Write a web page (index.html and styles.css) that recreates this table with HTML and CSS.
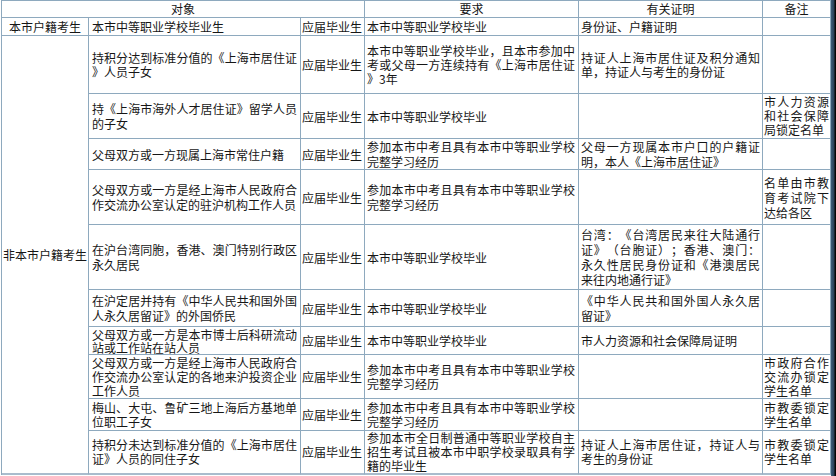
FILE: index.html
```html
<!DOCTYPE html>
<html lang="zh-CN">
<head>
<meta charset="utf-8">
<title>招生对象</title>
<link rel="stylesheet" href="styles.css">
</head>
<body>
<div class="page">
  <div class="sheet">
    <table class="grid">
      <colgroup>
        <col class="c1"><col class="c2"><col class="c3"><col class="c4"><col class="c5"><col class="c6">
      </colgroup>
      <tr class="r0">
        <td colspan="3" class="head">对象</td>
        <td class="head">要求</td>
        <td class="head">有关证明</td>
        <td class="head">备注</td>
      </tr>
      <tr class="r1">
        <td class="cat">本市户籍考生</td>
        <td class="who">本市中等职业学校毕业生</td>
        <td class="kind">应届毕业生</td>
        <td class="req">本市中等职业学校毕业</td>
        <td class="doc">身份证、户籍证明</td>
        <td class="note"></td>
      </tr>
      <tr class="r2">
        <td class="cat" rowspan="10">非本市户籍考生</td>
        <td class="who"><span class="ln f">持积分达到标准分值的《上海市居住证</span><span class="ln">》人员子女</span></td>
        <td class="kind">应届毕业生</td>
        <td class="req"><span class="ln f">本市中等职业学校毕业，且本市参加中</span><span class="ln f">考或父母一方连续持有《上海市居住证</span><span class="ln">》3年</span></td>
        <td class="doc"><span class="ln f">持证人上海市居住证及积分通知</span><span class="ln">单，持证人与考生的身份证</span></td>
        <td class="note"></td>
      </tr>
      <tr class="r3">
        <td class="who"><span class="ln f">持《上海市海外人才居住证》留学人员</span><span class="ln">的子女</span></td>
        <td class="kind">应届毕业生</td>
        <td class="req">本市中等职业学校毕业</td>
        <td class="doc"></td>
        <td class="note"><span class="ln f">市人力资源</span><span class="ln f">和社会保障</span><span class="ln">局锁定名单</span></td>
      </tr>
      <tr class="r4">
        <td class="who">父母双方或一方现属上海市常住户籍</td>
        <td class="kind">应届毕业生</td>
        <td class="req"><span class="ln f">参加本市中考且具有本市中等职业学校</span><span class="ln">完整学习经历</span></td>
        <td class="doc"><span class="ln f">父母一方现属本市户口的户籍证</span><span class="ln">明，本人《上海市居住证》</span></td>
        <td class="note"></td>
      </tr>
      <tr class="r5">
        <td class="who"><span class="ln f">父母双方或一方是经上海市人民政府合</span><span class="ln">作交流办公室认定的驻沪机构工作人员</span></td>
        <td class="kind">应届毕业生</td>
        <td class="req"><span class="ln f">参加本市中考且具有本市中等职业学校</span><span class="ln">完整学习经历</span></td>
        <td class="doc"></td>
        <td class="note"><span class="ln f">名单由市教</span><span class="ln f">育考试院下</span><span class="ln">达给各区</span></td>
      </tr>
      <tr class="r6">
        <td class="who"><span class="ln f">在沪台湾同胞，香港、澳门特别行政区</span><span class="ln">永久居民</span></td>
        <td class="kind">应届毕业生</td>
        <td class="req">本市中等职业学校毕业</td>
        <td class="doc"><span class="ln f">台湾：《台湾居民来往大陆通行</span><span class="ln f">证》（台胞证）；香港、澳门：</span><span class="ln f">永久性居民身份证和《港澳居民</span><span class="ln">来往内地通行证》</span></td>
        <td class="note"></td>
      </tr>
      <tr class="r7">
        <td class="who"><span class="ln f">在沪定居并持有《中华人民共和国外国</span><span class="ln">人永久居留证》的外国侨民</span></td>
        <td class="kind">应届毕业生</td>
        <td class="req">本市中等职业学校毕业</td>
        <td class="doc"><span class="ln f">《中华人民共和国外国人永久居</span><span class="ln">留证》</span></td>
        <td class="note"></td>
      </tr>
      <tr class="r8">
        <td class="who"><span class="ln f">父母双方或一方是本市博士后科研流动</span><span class="ln">站或工作站在站人员</span></td>
        <td class="kind">应届毕业生</td>
        <td class="req">本市中等职业学校毕业</td>
        <td class="doc">市人力资源和社会保障局证明</td>
        <td class="note"></td>
      </tr>
      <tr class="r9">
        <td class="who"><span class="ln f">父母双方或一方是经上海市人民政府合</span><span class="ln f">作交流办公室认定的各地来沪投资企业</span><span class="ln">工作人员</span></td>
        <td class="kind">应届毕业生</td>
        <td class="req"><span class="ln f">参加本市中考且具有本市中等职业学校</span><span class="ln">完整学习经历</span></td>
        <td class="doc"></td>
        <td class="note"><span class="ln f">市政府合作</span><span class="ln f">交流办锁定</span><span class="ln">学生名单</span></td>
      </tr>
      <tr class="r10">
        <td class="who"><span class="ln f">梅山、大屯、鲁矿三地上海后方基地单</span><span class="ln">位职工子女</span></td>
        <td class="kind">应届毕业生</td>
        <td class="req"><span class="ln f">参加本市中考且具有本市中等职业学校</span><span class="ln">完整学习经历</span></td>
        <td class="doc"></td>
        <td class="note"><span class="ln f">市教委锁定</span><span class="ln">学生名单</span></td>
      </tr>
      <tr class="r11">
        <td class="who"><span class="ln f">持积分未达到标准分值的《上海市居住</span><span class="ln">证》人员的同住子女</span></td>
        <td class="kind">应届毕业生</td>
        <td class="req"><span class="ln f">参加本市全日制普通中等职业学校自主</span><span class="ln f">招生考试且被本市中职学校录取具有学</span><span class="ln">籍的毕业生</span></td>
        <td class="doc"><span class="ln f">持证人上海市居住证，持证人与</span><span class="ln">考生的身份证</span></td>
        <td class="note"><span class="ln f">市教委锁定</span><span class="ln">学生名单</span></td>
      </tr>
    </table>
  </div>
  <div class="edge"></div>
</div>
</body>
</html>
```

FILE: styles.css
```css
html, body {
  margin: 0;
  padding: 0;
  background: #ffffff;
}

.page {
  display: flex;
  width: 836px;
  height: 476px;
  overflow: hidden;
  background: #f4f6f8;
}

.sheet {
  padding-left: 1px;
  background: #ffffff;
}

.edge {
  width: 5px;
  background: linear-gradient(to right, #3e5d7a 0, #2a4058 3px, #0b0b0b 4px, #000 5px);
}

.grid {
  table-layout: fixed;
  width: 830px;
  border-collapse: separate;
  border-spacing: 0;
  border-top: 1px solid #8ea9be;
  border-left: 1px solid #8ea9be;
  background: #ffffff;
  font-family: "Noto Sans CJK SC", "Noto Sans", sans-serif;
  font-size: 12px;
  color: #161616;
  font-feature-settings: "chws" 0, "halt" 0, "palt" 0;
  text-spacing-trim: space-all;
}

.c1 { width: 87px; }
.c2 { width: 212px; }
.c3 { width: 64px; }
.c4 { width: 214px; }
.c5 { width: 184px; }
.c6 { width: 68px; }

.grid td {
  box-sizing: border-box;
  border-right: 1px solid #8ea9be;
  border-bottom: 1px solid #8ea9be;
  padding: 0 2px;
  vertical-align: middle;
  line-height: 15px;
  text-align: left;
}

.ln {
  display: block;
}

.ln.f {
  text-align: justify;
  text-align-last: justify;
}

.grid td.head {
  text-align: center;
  line-height: 16px;
}

.grid td.cat {
  text-align: center;
  padding: 0 1px;
  white-space: nowrap;
}

.grid td.who {
  padding: 0 3px;
}

.grid td.kind {
  padding: 0 1px;
  white-space: nowrap;
}

.grid td.req {
  padding: 0 3px 0 2px;
}

.grid td.doc {
  padding: 0 2px 0 2px;
}

.grid td.note {
  padding: 0 1px 0 1px;
}

.r0 { height: 17px; }
.r1 { height: 18px; }
.r2 { height: 58px; }
.r3 { height: 45px; }
.r4 { height: 30px; }
.r5 { height: 55px; }
.r6 { height: 65px; }
.r7 { height: 37px; }
.r8 { height: 28px; }
.r9 { height: 44px; }
.r10 { height: 32px; }
.r11 { height: 44px; }

.r2 td { line-height: 14px; }
.r3 td.note { line-height: 14px; }
.r8 td { line-height: 13px; }
.r9 td, .r10 td, .r11 td { line-height: 14px; }

.r11 td { border-bottom: 2px solid #a9bccd; }
.r2 td.cat { border-bottom: 2px solid #a9bccd; }
```
